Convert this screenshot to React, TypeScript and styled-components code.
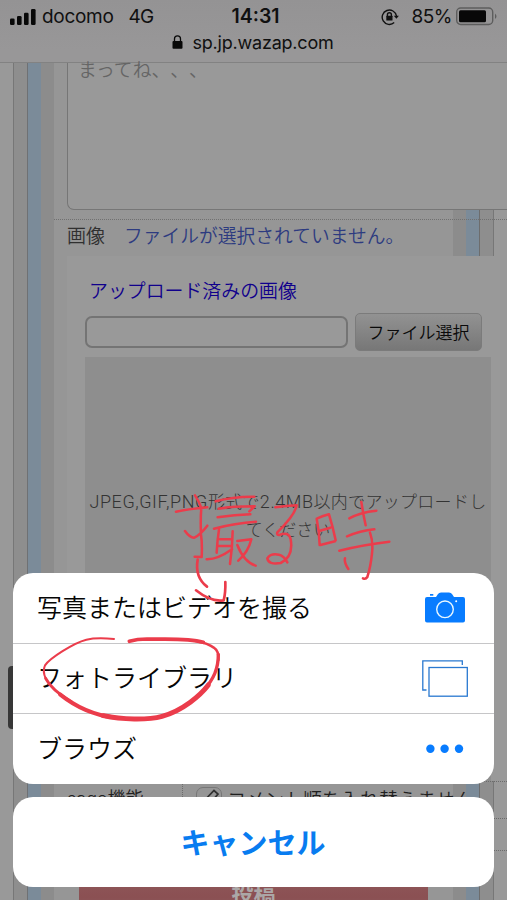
import React from "react";
import styled, { createGlobalStyle } from "styled-components";

const Global = createGlobalStyle`
  * { box-sizing: border-box; }
  body {
    margin: 0;
    background: #999;
    font-family: Inter, "Noto Sans CJK JP", sans-serif;
    text-spacing-trim: space-all;
  }
`;

const Screen = styled.div`
  position: relative;
  width: 507px;
  height: 900px;
  overflow: hidden;
  display: flex;
  flex-direction: column;
  background: #999;
`;

const Header = styled.header`
  flex: none;
  height: 63px;
  padding-top: 1px;
  background: linear-gradient(#949394, #989798 80%);
  border-bottom: 1px solid #828282;
  color: #101010;
`;

const StatusBar = styled.div`
  height: 31px;
  padding: 0 9px 0 10px;
  display: grid;
  grid-template-columns: 1fr auto 1fr;
  align-items: center;
`;

const StatusGroup = styled.div<{ $end?: boolean }>`
  display: flex;
  align-items: center;
  justify-content: ${(p) => (p.$end ? "flex-end" : "flex-start")};
`;

const StatusText = styled.span<{ $left: number; $bold?: boolean; $spacing?: number }>`
  margin-left: ${(p) => p.$left}px;
  font-size: ${(p) => (p.$bold ? 19.5 : 19)}px;
  line-height: 31px;
  font-weight: ${(p) => (p.$bold ? 600 : 400)};
  letter-spacing: ${(p) => p.$spacing ?? 0}px;
  white-space: nowrap;
`;

const Address = styled.div`
  height: 22px;
  margin-top: -1px;
  display: flex;
  align-items: center;
  justify-content: center;
  gap: 9px;
  padding-right: 1px;
  font-size: 18px;
  letter-spacing: -0.2px;
`;

const Page = styled.main`
  flex: 1;
  min-height: 0;
  padding-left: 54px;
  display: flex;
  flex-direction: column;
  background: linear-gradient(
    90deg,
    #999 0 13px, #777 13px 14px, #8e8e8e 14px 27px, #6f7174 27px 28px,
    #7b8b99 28px 41px, #8c8c8c 41px 54px, #969696 54px 453px,
    #8c8c8c 453px 466px, #7b8b99 466px 479px, #6d6d6d 479px 480px,
    #8e8e8e 480px 493px, #777 493px 494px, #999 494px
  );
`;

const TextArea = styled.div`
  flex: none;
  height: 147px;
  margin-left: 13px;
  width: 445px;
  padding: 0 0 0 10px;
  border: solid #767676;
  border-width: 0 0 1.5px 1px;
  border-radius: 0 0 5px 7px;
  background: #999;
  color: #656565;
  font-size: 18.8px;
  font-weight: 350;
  line-height: 16px;
`;

const FileRow = styled.div`
  flex: none;
  height: 37px;
  margin-top: 9px;
  padding: 0 0 0 13px;
  border-top: 1px dotted #707070;
  display: flex;
  gap: 19px;
  font-size: 19px;
  font-weight: 350;
  line-height: 33px;
  color: #303030;
`;

const FileStatus = styled.span`
  color: #2d3b80;
  font-size: 18.75px;
`;

const UploadPanel = styled.section`
  flex: none;
  height: 525px;
  margin-left: 13px;
  padding: 17px 16px 0 18px;
  background: #999;
  display: flex;
  flex-direction: column;
`;

const UploadTitle = styled.h2`
  margin: 0 0 0 4px;
  font-size: 18.9px;
  line-height: 37px;
  font-weight: 350;
  color: #10008c;
`;

const FileControls = styled.div`
  height: 40px;
  margin-top: 2px;
  display: flex;
  align-items: center;
  gap: 7px;
`;

const FileInput = styled.div`
  width: 263px;
  height: 32px;
  border: 2px solid #747474;
  border-radius: 7px;
  background: #999;
`;

const FileButton = styled.div`
  width: 127px;
  height: 38px;
  padding-bottom: 2px;
  display: flex;
  align-items: center;
  justify-content: center;
  border: 1.5px solid #7b7b7b;
  border-radius: 5px;
  background: linear-gradient(#929292, #777);
  color: #0a0a0a;
  font-size: 17px;
  font-weight: 350;
`;

const DropArea = styled.div`
  flex: 1;
  margin-top: 5px;
  width: 406px;
  padding-top: 131px;
  background: #8e8e8e;
  color: #333;
  text-align: center;
  font-family: Roboto, "Noto Sans CJK JP", sans-serif;
  font-size: 17px;
  font-weight: 300;
  line-height: 28px;
  white-space: nowrap;
`;

const DropLine = styled.div<{ $spacing?: number }>`
  letter-spacing: ${(p) => p.$spacing ?? 0}px;
`;

const DropLatin = styled.span`
  font-size: 18px;
  letter-spacing: 0.55px;
`;

const OptionRow = styled.div`
  flex: none;
  height: 37px;
  display: grid;
  grid-template-columns: 129px 1fr;
  border-top: 1px dotted #6b6b6b;
  color: #202020;
  font-size: 19px;
  font-weight: 350;
  line-height: 37px;
  background: linear-gradient(90deg, transparent 440px, #999 440px);
`;

const OptionLabel = styled.div`
  padding-left: 13px;
  border-right: 1px dotted #6c6c6c;
  font-size: 18px;
  line-height: 34px;
`;

const OptionValue = styled.div`
  padding-left: 13px;
  display: flex;
  gap: 5px;
  white-space: nowrap;
`;

const CheckBox = styled.span`
  width: 26px;
  height: 26px;
  margin-top: 5px;
  border: 1.5px solid #777;
  border-radius: 7px;
  display: flex;
`;

const DottedLine = styled.div<{ $gap: number }>`
  flex: none;
  margin-top: ${(p) => p.$gap}px;
  border-top: 1px dotted #6b6b6b;
`;

const Submit = styled.div`
  flex: none;
  width: 349px;
  height: 48px;
  margin: 22px 0 0 25px;
  border-radius: 8px;
  background: linear-gradient(#8f595a, #8b5053 50%, #8b6263);
  color: #aba7a7;
  text-align: center;
  font-size: 22px;
  line-height: 42px;
  font-weight: 700;
`;

const ScrollThumb = styled.div`
  position: absolute;
  left: 8px;
  top: 666px;
  width: 12px;
  height: 63px;
  border-radius: 4px;
  background: #373737;
`;

const SheetLayer = styled.div`
  position: absolute;
  inset: auto 13px 13px;
  display: flex;
  flex-direction: column;
  gap: 13px;
`;

const Sheet = styled.div`
  height: 211px;
  border-radius: 20px;
  background: #fff;
  display: grid;
  grid-template-rows: 69.5px 70.5px 71px;
  overflow: hidden;
`;

const Action = styled.div`
  display: flex;
  align-items: center;
  justify-content: space-between;
  padding: 0 26px 0 24px;
  color: #050505;
  font-size: 25px;
  font-weight: 350;
  line-height: 36px;

  & + & {
    border-top: 1px solid #c6c6c8;
  }
`;

const IconSlot = styled.div`
  width: 46px;
  display: flex;
  justify-content: center;
`;

const Cancel = styled.div`
  height: 90px;
  padding: 0 1px 2px 0;
  border-radius: 20px;
  background: #fff;
  color: #087cf0;
  display: flex;
  align-items: center;
  justify-content: center;
  font-size: 29px;
  font-weight: 700;
`;

const Ink = styled.svg`
  position: absolute;
  inset: 0;
  fill: none;
  stroke: #eb3c4b;
  stroke-linecap: round;
  stroke-linejoin: round;
`;

const Signal = () => (
  <svg width="26" height="18" viewBox="0 0 26 18" fill="#080808">
    <rect x="0" y="10.5" width="4.6" height="6.5" rx="1.3" />
    <rect x="7" y="8" width="4.6" height="9" rx="1.3" />
    <rect x="14" y="4.7" width="4.6" height="12.3" rx="1.3" />
    <rect x="21" y="1" width="4.6" height="16" rx="1.3" />
  </svg>
);

const RotationLock = () => (
  <svg width="18" height="18" viewBox="0 0 18 18" fill="none" stroke="#111" strokeWidth="1.4">
    <path d="M15.5 8A7.2 7.2 0 1 0 13.2 14.6" />
    <path d="M12.8 7.8h5.1l-2.5 3z" fill="#111" stroke="none" />
    <path d="M6.4 8V6.7a2 2 0 0 1 4 0V8" />
    <rect x="5.3" y="7.7" width="6.2" height="4.9" rx=".6" fill="#111" stroke="none" />
  </svg>
);

const Battery = () => (
  <svg width="43" height="19" viewBox="0 0 43 19">
    <rect x="1.7" y="1" width="36" height="16.5" rx="4" fill="none" stroke="#5d5d5d" strokeWidth="1.4" />
    <rect x="4" y="3.2" width="27" height="12" rx="1.5" fill="#080808" />
    <path d="M40 6.5q3 2.8 0 5.6z" fill="#5d5d5d" />
  </svg>
);

const Padlock = () => (
  <svg width="11" height="14" viewBox="0 0 11 14">
    <path d="M2.5 6.5V3.8a3 3 0 0 1 6 0v2.7" fill="none" stroke="#080808" strokeWidth="1.3" />
    <rect x="0.5" y="6" width="10" height="7.7" rx="1" fill="#080808" />
  </svg>
);

const Camera = () => (
  <svg width="40" height="31" viewBox="0 0 40 31">
    <path
      d="M2 5H11L13 2Q14 .5 16 .5H24Q26 .5 27 2L29 5H38Q40 5 40 7V28.5Q40 30.5 38 30.5H2Q0 30.5 0 28.5V7Q0 5 2 5Z"
      fill="#087cff"
    />
    <rect x="5" y="2" width="3.3" height="1.7" fill="#087cff" />
    <circle cx="20" cy="17.3" r="8.3" fill="none" stroke="#e8f7ff" strokeWidth="1.4" />
    <circle cx="31.2" cy="9.2" r="1" fill="#fff" />
  </svg>
);

const Photos = () => (
  <svg width="46" height="37" viewBox="0 0 46 37" fill="none" stroke="#2878d0" strokeWidth="1.3">
    <path d="M4.5 30H.8V.8H40.3V5" />
    <rect x="7" y="7.5" width="38.3" height="28.7" />
  </svg>
);

const Dots = () => (
  <svg width="38" height="10" viewBox="0 0 38 10" fill="#087cff">
    <circle cx="4.4" cy="4.8" r="4.2" />
    <circle cx="18.6" cy="4.8" r="4.2" />
    <circle cx="33" cy="4.8" r="4.2" />
  </svg>
);

const Pencil = () => (
  <svg width="24" height="24" viewBox="0 0 24 24" fill="none" stroke="#303030" strokeWidth="1.7">
    <path d="M5 15 17 2.5 21 6 10 19 4 21Z" />
  </svg>
);

const Handwriting = () => (
  <Ink width="507" height="900" viewBox="0 0 507 900">
    <g transform="translate(170 480) scale(.33333)" strokeWidth="7.6">
      <path d="M18 95Q50 88 112 82M75 46Q87 64 94 84Q91 115 93 164Q97 190 95 231L74 230M45 153Q60 174 73 173Q90 165 112 137" />
      <path d="M137 64Q190 49 253 50M146 86Q190 79 254 79L238 94M143 112Q195 104 241 103M132 146Q195 129 258 125" />
      <path d="M147 148Q142 180 140 218M150 178L185 177M146 198L186 198M188 154Q187 205 180 252M110 238Q142 239 186 208M202 183L244 178Q235 216 205 242M202 195Q221 245 257 257" />
      <path d="M316 82Q350 77 380 76Q375 105 322 157Q319 167 330 164Q357 154 362 178Q371 230 332 249Q295 255 292 235Q301 219 327 224Q342 227 352 247" />
      <path d="M440 116Q448 155 449 195M442 115Q459 108 477 103Q489 142 497 181M450 152L481 143M451 195L495 184" />
      <path d="M538 115Q570 97 619 92M574 66Q580 104 587 136M531 169Q570 153 613 148M508 212Q580 194 658 185M600 158Q610 185 606 220Q602 260 592 291Q587 299 579 295M525 235Q522 247 535 267" />
      <path d="M83 239Q74 291 111 320M78 331Q123 367 161 361Q167 338 166 306" strokeWidth="8" />
    </g>
    <g transform="translate(0 600) scale(.33333)">
      <path d="M342 117Q290 112 259 119C220 129 149 175 135 196Q127 213 137 235" strokeWidth="6" />
      <path d="M137 235C151 263 183 287 215 306" strokeWidth="9" />
      <path d="M180 283C224 318 283 345 340 352" strokeWidth="12" />
      <path d="M310 347C366 359 442 361 486 349C550 331 602 285 625 255" strokeWidth="15" />
      <path d="M610 272C642 236 655 206 655 163" strokeWidth="10" />
      <path d="M655 180Q657 153 643 144Q625 130 587 123" strokeWidth="8" />
      <path d="M610 127C559 113 494 119 441 117Q412 117 388 124" strokeWidth="11" />
    </g>
  </Ink>
);

export default function App() {
  return (
    <Screen>
      <Global />
      <Header>
        <StatusBar>
          <StatusGroup>
            <Signal />
            <StatusText $left={6} $spacing={-0.3}>docomo</StatusText>
            <StatusText $left={15} $spacing={-0.7}>4G</StatusText>
          </StatusGroup>
          <StatusText $left={3} $bold>14:31</StatusText>
          <StatusGroup $end>
            <RotationLock />
            <StatusText $left={13} $spacing={-0.5}>85%</StatusText>
            <StatusText $left={3} />
            <Battery />
          </StatusGroup>
        </StatusBar>
        <Address>
          <Padlock />
          <span>sp.jp.wazap.com</span>
        </Address>
      </Header>
      <Page>
        <TextArea>まってね、、、</TextArea>
        <FileRow>
          <span>画像</span>
          <FileStatus>ファイルが選択されていません。</FileStatus>
        </FileRow>
        <UploadPanel>
          <UploadTitle>アップロード済みの画像</UploadTitle>
          <FileControls>
            <FileInput />
            <FileButton>ファイル選択</FileButton>
          </FileControls>
          <DropArea>
            <DropLine $spacing={0.3}>
              <DropLatin>JPEG,GIF,PNG</DropLatin>形式で<DropLatin>2.4MB</DropLatin>以内でアップロードし
            </DropLine>
            <DropLine>てください</DropLine>
          </DropArea>
        </UploadPanel>
        <OptionRow>
          <OptionLabel>sage機能</OptionLabel>
          <OptionValue>
            <CheckBox><Pencil /></CheckBox>
            コメント順を入れ替えません
          </OptionValue>
        </OptionRow>
        <DottedLine $gap={0} />
        <DottedLine $gap={31} />
        <Submit>投稿</Submit>
      </Page>
      <ScrollThumb />
      <SheetLayer>
        <Sheet>
          <Action>写真またはビデオを撮る<IconSlot><Camera /></IconSlot></Action>
          <Action>フォトライブラリ<IconSlot><Photos /></IconSlot></Action>
          <Action>ブラウズ<IconSlot><Dots /></IconSlot></Action>
        </Sheet>
        <Cancel>キャンセル</Cancel>
      </SheetLayer>
      <Handwriting />
    </Screen>
  );
}
